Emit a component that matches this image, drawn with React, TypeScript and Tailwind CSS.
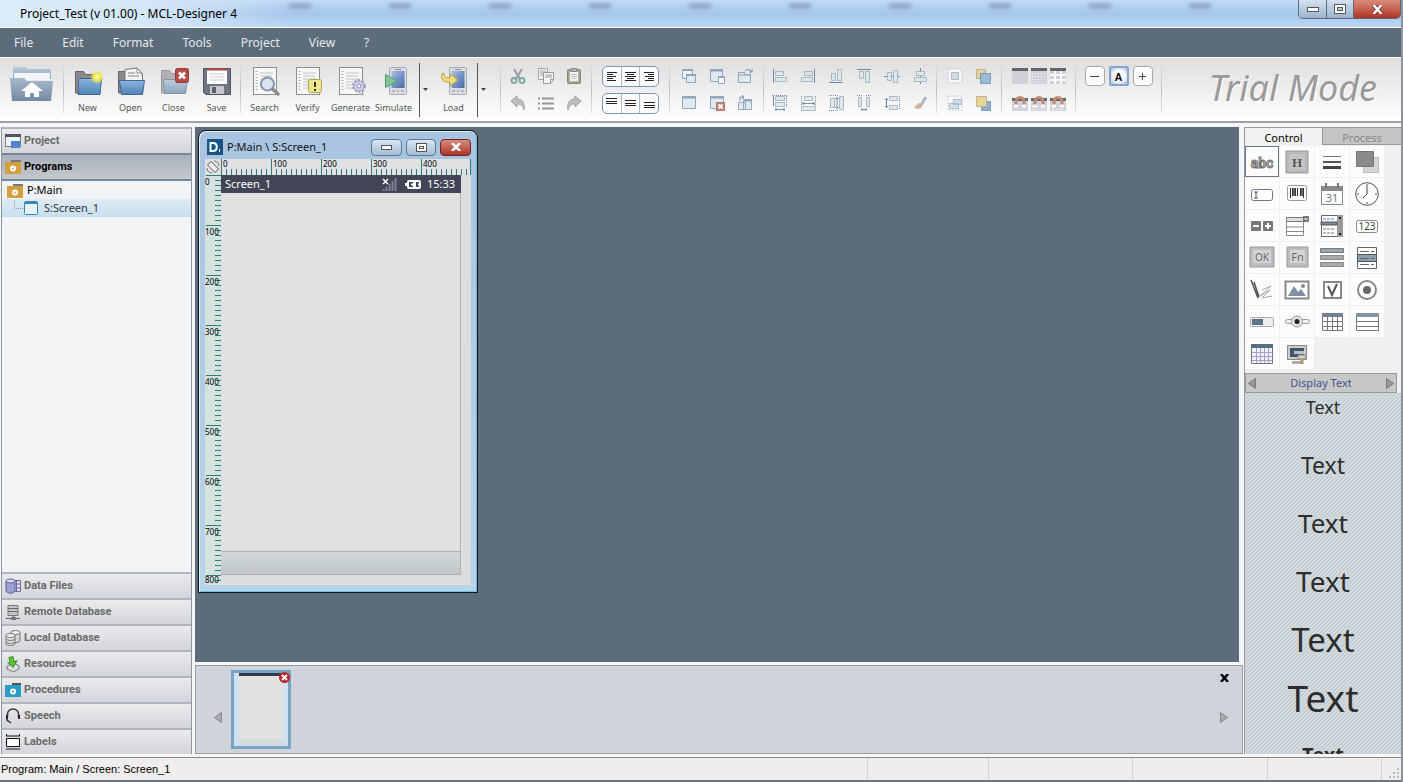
import type { ReactNode } from "react";

type IconProps = { w?: number; h?: number; box?: string; children: ReactNode };

// 图标外壳
function Icon({ w = 16, h = 16, box, children }: IconProps) {
  return (
    <svg width={w} height={h} viewBox={box || `0 0 ${w} ${h}`} fill="none" aria-hidden="true" className="shrink-0">
      {children}
    </svg>
  );
}

// 全局渐变
function Defs() {
  return (
    <svg width="0" height="0" className="absolute" aria-hidden="true">
      <defs>
        <linearGradient id="blue" x1="0" y1="0" x2="0" y2="1">
          <stop offset="0" stopColor="#8db6df" />
          <stop offset="1" stopColor="#4f80b5" />
        </linearGradient>
        <linearGradient id="pale" x1="0" y1="0" x2="0" y2="1">
          <stop offset="0" stopColor="#bccbdc" />
          <stop offset="1" stopColor="#8fa5be" />
        </linearGradient>
        <linearGradient id="home" x1="0" y1="0" x2="0" y2="1">
          <stop offset="0" stopColor="#a9b9cb" />
          <stop offset="1" stopColor="#7389a3" />
        </linearGradient>
        <linearGradient id="phone" x1="0" y1="0" x2="1" y2="1">
          <stop offset="0" stopColor="#a8c0e4" />
          <stop offset="1" stopColor="#4568a8" />
        </linearGradient>
        <radialGradient id="glow">
          <stop offset="0" stopColor="#fffbd0" />
          <stop offset="0.5" stopColor="#f4e64a" />
          <stop offset="1" stopColor="#f4e64a" stopOpacity="0" />
        </radialGradient>
      </defs>
    </svg>
  );
}

const folderBack = <path d="M2.500 27V5.500h8l2 3h14V27z" fill="#8a8a8a" stroke="#666" />;
const page = (
  <>
    <rect x="3.500" y="1.500" width="23" height="27" fill="#f7f7f5" stroke="#8e8e8e" />
    <path d="M6.500 5v21" stroke="#aaa" strokeWidth="2" strokeDasharray="1 2" />
    <path d="M10 7h13M10 10h12M10 13h13M10 16h11M10 19h13M10 22h11" stroke="#c4c4c4" />
  </>
);
const phone = (
  <>
    <rect x="10.500" y="1.500" width="17" height="27" rx="1" fill="#dcdde2" stroke="#a7a9b2" />
    <rect x="12.500" y="5" width="13" height="17" fill="url(#phone)" />
    <path d="M16 3.500h6M13 25h3M18 25h2M22 25h3" stroke="#8c8f9c" />
  </>
);

const big: Record<string, ReactNode> = {
  New: (
    <>
      {folderBack}
      <path d="M5.500 12.500h23l-1.500 16h-22z" fill="url(#blue)" stroke="#41678f" />
      <circle cx="24" cy="11" r="7" fill="url(#glow)" />
    </>
  ),
  Open: (
    <>
      {folderBack}
      <path d="M9 3.500l12-1.500 5 5 1 9H9z" fill="#f4f4f4" stroke="#777" />
      <path d="M12 7h7M12 10h11M21 2v5h5" stroke="#888" />
      <path d="M3.500 14.500h25l-2 14h-21z" fill="url(#blue)" stroke="#41678f" />
    </>
  ),
  Close: (
    <>
      <path d="M2.500 27V4.500h8l2 3h14V27z" fill="#b0b2b6" stroke="#999" />
      <path d="M4.500 13.500h24l-2 14h-21z" fill="url(#pale)" stroke="#8395aa" />
      <rect x="16.500" y="2.500" width="13" height="14" rx="2" fill="#b64a48" stroke="#8f3938" />
      <path d="M20 6.500l6 6M26 6.500l-6 6" stroke="#fff" strokeWidth="2.500" />
    </>
  ),
  Save: (
    <>
      <path d="M1.500 2.500h27v26h-25l-2-2z" fill="#707583" stroke="#50545f" />
      <rect x="5" y="3" width="20" height="15" fill="#fbfbfb" />
      <path d="M5 3.500h20" stroke="#b2464a" strokeWidth="2" />
      <path d="M8 8h14M8 11h14M8 14h14" stroke="#cfcfd4" />
      <rect x="8" y="20" width="14" height="8" fill="#c5c7cb" />
      <rect x="10" y="21" width="4" height="6" fill="#5b5f69" />
    </>
  ),
  Search: (
    <>
      {page}
      <circle cx="17.500" cy="18" r="6.500" fill="#d5e4f2" fillOpacity=".9" stroke="#8496ac" strokeWidth="2" />
      <path d="M22.500 23l5.500 5" stroke="#8a8a8a" strokeWidth="3.500" strokeLinecap="round" />
    </>
  ),
  Verify: (
    <>
      {page}
      <rect x="15.500" y="13.500" width="13" height="13" rx="2" fill="#efe78e" stroke="#b1a752" />
      <path d="M22 16v5M22 23v2" stroke="#333" strokeWidth="2" />
    </>
  ),
  Generate: (
    <>
      {page}
      <circle cx="23" cy="20" r="6" stroke="#9a9fbb" strokeWidth="2" strokeDasharray="2.200 1.600" />
      <circle cx="23" cy="20" r="5" fill="#cfd3e4" stroke="#9aa0bd" />
      <circle cx="23" cy="20" r="2" fill="#f2f2f6" stroke="#8e94b3" />
    </>
  ),
  Simulate: (
    <>
      {phone}
      <path d="M6.500 8.500l12 6.500-12 6.500z" fill="#7fc79a" stroke="#4f9a72" />
    </>
  ),
  Load: (
    <>
      {phone}
      <path d="M3 8c-2 6 3 9 8 8v4l8-6-8-6v4c-4 0-6-1-6-5z" fill="#f0dd7c" stroke="#b9a046" />
    </>
  ),
};

function BigButton({ name }: { name: string }) {
  return (
    <button className="flex h-full w-[43px] shrink-0 flex-col items-center pt-2">
      <Icon w={30} h={30}>{big[name]}</Icon>
      <span className="mt-[5px] text-[9px] leading-[14px] text-[#555]">{name}</span>
    </button>
  );
}

function Sep() {
  return <div className="h-12 w-px shrink-0 self-center bg-linear-to-b from-gray-300/50 via-[#bfbfbf] to-gray-300/50" />;
}

function DropArrow({ label }: { label: string }) {
  return (
    <button aria-label={label} className="flex h-[54px] w-[11px] shrink-0 items-center justify-center self-center border-l border-[#555]">
      <Icon w={5} h={3}><path d="M0 0h5L2.500 3z" fill="#444" /></Icon>
    </button>
  );
}

const st = "#8299b3";
const fl = "#dfe8f0";
const dk = "#5b78ab";

// 编辑
const editIcons: [string, ReactNode][] = [
  ["Cut", <><path d="M4 1l6 10M12 1L6 11" stroke="#8b9196" strokeWidth="2" /><circle cx="4" cy="12.500" r="2.500" stroke="#709c95" strokeWidth="2" /><circle cx="12" cy="12.500" r="2.500" stroke="#709c95" strokeWidth="2" /></>],
  ["Copy", <><path d="M.5.5h9v11h-9zM2 3h6M2 5h6M2 7h6" fill="#f5f5f5" stroke="#999" /><path d="M5.500 4.500h10v7l-3 4h-7zM7 7h7M7 9h7M12.500 15v-3.500h3" fill="#fafafa" stroke="#8a8a8a" /></>],
  ["Paste", <><rect x="1.500" y="1.500" width="13" height="14" rx="1" fill="#9d9576" stroke="#7c765f" /><path d="M3.500 3.500h9v10h-9z" fill="#f5f5f3" stroke="#aaa" /><path d="M5 .5h6v3H5z" fill="#aaa" stroke="#777" /><path d="M5 6.500h6M5 8.500h6M5 10.500h5" stroke="#bbb" /></>],
  ["Undo", <path d="M1 6l6-5v3c6 0 8 4 7 11-1-4-3-6-7-6v3z" fill="#b5b5b5" stroke="#939393" />],
  ["List", <path d="M0 3.500h2M0 8.500h2M0 13.500h2M4 3.500h12M4 8.500h12M4 13.500h12" stroke="#888" strokeWidth="2" />],
  ["Redo", <path d="M15 6L9 1v3C3 4 1 8 2 15c1-4 3-6 7-6v3z" fill="#b5b5b5" stroke="#939393" />],
];

// 窗口
const winIcons: [string, ReactNode][] = [
  ["Cascade", <><path d="M1.500 1.500h10v9h-10z" fill="#eef3f8" stroke={st} /><path d="M1 2.500h11" stroke={st} /><path d="M5.500 6.500h9v8h-9z" fill={fl} stroke={st} /><path d="M5 7h10" stroke={st} strokeWidth="2" /></>],
  ["Resize window", <><path d="M1.500 1.500h12v12h-12z" fill={fl} stroke={st} /><path d="M1 2.500h13" stroke={st} strokeWidth="2" /><path d="M9.500 8.500h6v7h-6z" fill="#fff" stroke={st} /><path d="M9 9.500h7" stroke={st} /></>],
  ["Rotate window", <><path d="M1.500 4.500h6v2h6v8h-12z" fill={fl} stroke={st} /><path d="M1 7h13" stroke={st} /><path d="M8 3c2-2 5-2 6 1M12 4h3V1" stroke={dk} /></>],
  ["Window", <><path d="M1.500 1.500h13v12h-13z" fill={fl} stroke={st} /><path d="M1 2.500h14" stroke={st} strokeWidth="2" /></>],
  ["Close window", <><path d="M1.500 1.500h13v12h-13z" fill={fl} stroke={st} /><path d="M1 2.500h14" stroke={st} strokeWidth="2" /><path d="M7 7h9v9H7z" fill="#b3655f" /><path d="M9.500 9.500l4 4M13.500 9.500l-4 4" stroke="#fff" strokeWidth="2" /></>],
  ["Split window", <><path d="M1.500 7.500h7v7h-7zM6.500 4.500h8v10h-8z" fill={fl} stroke={st} /><path d="M6 5.500h9" stroke={st} strokeWidth="2" /><path d="M3 6V2h4M5 0l2 2-2 2" stroke={dk} /></>],
];

// 对齐
const bars = (d: string, line: string, dash?: boolean) => (
  <>
    <path d={d} fill="#dde6e9" stroke="#9db0bf" />
    <path d={line} stroke={dk} strokeDasharray={dash ? "1 1" : undefined} />
  </>
);
const alignIcons: [string, ReactNode][] = [
  ["Align left", bars("M3.500 3.500h8v4h-8zM3.500 9.500h11v4h-11z", "M1.500 1v14")],
  ["Align right", bars("M4.500 3.500h8v4h-8zM1.500 9.500h11v4h-11z", "M14.500 1v14")],
  ["Align bottom", bars("M3.500 5.500h4v7h-4zM9.500 1.500h4v11h-4z", "M1 14.500h14")],
  ["Align top", bars("M3.500 3.500h4v7h-4zM9.500 3.500h4v11h-4z", "M1 1.500h14")],
  ["Align middle", <><path d="M0 8.500h16" stroke={dk} />{bars("M3.500 4.500h4v8h-4zM9.500 2.500h4v12h-4z", "")}</>],
  ["Align center", <><path d="M8.500 0v16" stroke={dk} />{bars("M4.500 3.500h8v4h-8zM2.500 9.500h12v4h-12z", "")}</>],
  ["Same width", <>{bars("M3.500 1.500h9v4h-9zM3.500 7.500h9v4h-9z", "M14.500 1v12M0 .5h15", true)}<path d="M1.500 1v10M3 14.500h10M4 13v3M12 13v3" stroke={dk} /></>],
  ["Space across", <>{bars("M4.500 1.500h8v4h-8zM1.500 11.500h14v4h-14z", "M1.500 1v9M15.500 1v9", true)}<path d="M2 8.500h13M3.500 7v3M13.500 7v3" stroke={dk} /></>],
  ["Same height", <>{bars("M2.500 3.500h4v9h-4zM11.500 1.500h4v13h-4z", "M1 .5h9M1 15.500h9", true)}<path d="M9 2v12M7.500 3.500h3M7.500 12.500h3" stroke={dk} /></>],
  ["Space columns", <>{bars("M2.500 2.500h3v9h-3zM10.500 2.500h3v9h-3z", "M1 .5h5M10 .5h5", true)}<path d="M5 14.500h6M6 13v3M10 13v3" stroke={dk} /></>],
  ["Space rows", <>{bars("M5.500 1.500h8v4h-8zM5.500 10.500h8v4h-8z", "M15.500 1v14", true)}<path d="M2.500 3v10M1 4.500h3M1 11.500h3" stroke={dk} /></>],
  ["Format painter", <><path d="M14 2l-5 8" stroke="#a2acb8" strokeWidth="3" /><path d="M2 12c3-1 3-4 6-4l2 3c0 3-5 4-8 1z" fill="#caa58a" /></>],
];

const orderIcons: [string, ReactNode][] = [
  ["Group", <><path d="M1 1h14v14H1z" fill="#fafafa" stroke="#bcc5cf" strokeDasharray="2 1" /><path d="M4.500 4.500h7v7h-7z" fill="#cfd9e3" stroke="#a4b3c2" /></>],
  ["Bring to front", <><path d="M1.500 1.500h9v9h-9z" fill="#dfcf9a" stroke="#b8aa78" /><path d="M5.500 5.500h10v10h-10z" fill="#8fb1d6" stroke="#6f8fb3" /></>],
  ["Ungroup", <><path d="M1 1h14v14H1z" fill="#fafafa" stroke="#bcc5cf" strokeDasharray="2 1" /><path d="M6.500 4.500h8v5h-8zM2.500 8.500h9v5h-9z" fill="#cfd9e3" stroke="#a4b3c2" /></>],
  ["Send to back", <><path d="M6.500 6.500h9v9h-9z" fill="#7d9cc2" stroke="#6f8fb3" /><path d="M1.500 1.500h10v10h-10z" fill="#e3d08c" stroke="#b8aa78" /></>],
];

const magnet = <><path d="M4 11V6.500a4 4 0 018 0V11" stroke="#b5795c" strokeWidth="3" /><path d="M2 11h4M10 11h4" stroke="#fff" strokeWidth="3" /></>;
const dots = <path d="M1 5.500h14M1 8.500h14M1 11.500h14M1 14.500h14" stroke="#fff" strokeDasharray="1 2" />;
const snapIcons: [string, ReactNode][] = [
  ["No grid", <><path d="M0 1h16v15H0z" fill="#ccccd6" /><path d="M0 1.500h16" stroke="#4d4d54" strokeWidth="3" /></>],
  ["Dot grid", <><path d="M0 1h16v15H0z" fill="#ccccd6" />{dots}<path d="M0 1.500h16" stroke="#4d4d54" strokeWidth="3" /></>],
  ["Line grid", <><path d="M0 1h16v15H0z" fill="#ccccd6" /><path d="M5 3v13M11 3v13M0 7h16M0 12h16" stroke="#fff" strokeWidth="2" /><path d="M0 1.500h16" stroke="#4d4d54" strokeWidth="3" /></>],
  ["Snap off", <><path d="M0 3h16v13H0z" fill="#ccccd6" /><path d="M0 4.500h16" stroke="#4d4d54" strokeWidth="3" />{magnet}</>],
  ["Snap to dots", <><path d="M0 3h16v13H0z" fill="#ccccd6" /><path d="M0 4.500h16" stroke="#4d4d54" strokeWidth="3" /><path d="M1 11.500h14M1 14.500h14" stroke="#fff" strokeDasharray="1 2" />{magnet}</>],
  ["Snap to lines", <><path d="M0 3h16v13H0z" fill="#ccccd6" /><path d="M0 4.500h16" stroke="#4d4d54" strokeWidth="3" /><path d="M2 14.500h12" stroke="#fff" strokeDasharray="2 2" />{magnet}</>],
];

function IconGroup({ items, cols, width }: { items: [string, ReactNode][]; cols: string; width: string }) {
  return (
    <>
      <div className={`grid shrink-0 justify-center gap-y-[11px] self-start pt-2.5 opacity-85 ${cols} ${width}`}>
        {items.map(([name, art]) => (
          <button key={name} aria-label={name} className="flex justify-center">
            <Icon>{art}</Icon>
          </button>
        ))}
      </div>
      <Sep />
    </>
  );
}

function AlignBox({ labels, paths }: { labels: string[]; paths: string[] }) {
  return (
    <div className="flex h-[21px] w-[57px] divide-x divide-[#a9bccb] rounded-[5px] border border-[#7f97ab] bg-[#fcfcfc]">
      {paths.map((d, i) => (
        <button key={labels[i]} aria-label={labels[i]} className="flex flex-1 items-center justify-center">
          <Icon w={11} h={11}><path d={d} stroke="#222" /></Icon>
        </button>
      ))}
    </div>
  );
}

function Toolbar() {
  return (
    <div className="flex h-[65px] shrink-0 items-stretch overflow-hidden border-b-2 border-[#9fa1a6] bg-linear-to-b from-[#dedede] to-white">
      <button aria-label="Home" className="flex w-[63px] shrink-0 items-start justify-center pt-2">
        <Icon w={43} h={36}>
          <path d="M3 12V1h13l2 2h23v10z" fill="url(#pale)" />
          <path d="M4 7h36v7H4z" fill="#f2f5f8" />
          <path d="M0 12h14l3 3h26l-2 20H2z" fill="url(#home)" />
          <path d="M22 16l11 9h-4v6h-5v-4h-4v4h-5v-6h-4z" fill="#fff" />
        </Icon>
      </button>
      <Sep />
      <div className="flex shrink-0 px-[2px]">
        {["New", "Open", "Close", "Save"].map((n) => <BigButton key={n} name={n} />)}
      </div>
      <Sep />
      <div className="flex shrink-0 pr-1 pl-0.5">
        {["Search", "Verify", "Generate", "Simulate"].map((n) => <BigButton key={n} name={n} />)}
      </div>
      <DropArrow label="Simulate options" />
      <div className="flex shrink-0 px-[2px]"><BigButton name="Load" /></div>
      <DropArrow label="Load options" />
      <div className="w-3 shrink-0" />
      <Sep />
      <IconGroup items={editIcons} cols="grid-cols-[repeat(3,28px)]" width="w-[90px]" />
      <div className="flex w-[77px] shrink-0 flex-col items-center gap-1.5 pt-2">
        <AlignBox
          labels={["Text left", "Text center", "Text right"]}
          paths={["M1 1.500h10M1 3.500h6M1 5.500h9M1 7.500h6M1 9.500h9", "M0 1.500h11M2 3.500h7M0 5.500h11M2 7.500h7M0 9.500h11", "M0 1.500h10M4 3.500h6M1 5.500h9M4 7.500h6M1 9.500h9"]}
        />
        <AlignBox
          labels={["Text top", "Text middle", "Text bottom"]}
          paths={["M0 .5h11M0 3.500h11M0 5.500h11", "M0 2.500h11M0 5.500h11M0 7.500h11", "M0 4.500h11M0 7.500h11M0 9.500h11"]}
        />
      </div>
      <Sep />
      <IconGroup items={winIcons} cols="grid-cols-[repeat(3,28px)]" width="w-[93px]" />
      <IconGroup items={alignIcons} cols="grid-cols-[repeat(6,28px)]" width="w-[172px]" />
      <IconGroup items={orderIcons} cols="grid-cols-[repeat(2,28px)]" width="w-[64px]" />
      <IconGroup items={snapIcons} cols="grid-cols-[repeat(3,19px)]" width="w-[73px]" />
      <div className="flex w-[85px] shrink-0 items-start justify-center gap-1 pt-2">
        <button aria-label="Zoom out" className="flex size-5 items-center justify-center rounded border border-[#aaa] bg-[#fafafa]">
          <Icon w={9} h={9}><path d="M0 4.500h9" stroke="#444" /></Icon>
        </button>
        <button className="flex size-5 items-center justify-center rounded-xs border-2 border-[#86a5cf] bg-[radial-gradient(#ffffff_50%,#9db6da_100%)] text-[11px] leading-none font-semibold text-black">A</button>
        <button aria-label="Zoom in" className="flex size-5 items-center justify-center rounded border border-[#aaa] bg-[#fafafa]">
          <Icon w={9} h={9}><path d="M1 4.500h7M4.500 1v7" stroke="#444" /></Icon>
        </button>
      </div>
      <Sep />
      <div className="flex flex-1 items-center justify-end pr-6 pb-1 text-[36px] leading-none whitespace-nowrap text-[#9b9b9b] italic [text-shadow:1px_1px_0_#fff]">
        Trial Mode
      </div>
    </div>
  );
}

// 侧边栏图标
const gear = <circle cx="8" cy="9.500" r="2" stroke="#fff" strokeWidth="2" />;
const side: Record<string, ReactNode> = {
  Project: <><path d="M.5 1.500h15v12H.5z" fill="#f1f2f4" stroke="#777c85" /><path d="M0 2.500h16" stroke="#4f545e" strokeWidth="3" /><path d="M6 8h9v7H6z" fill="#4f86d0" /></>,
  Programs: <><path d="M6 3V1h10v3" fill="#777" /><path d="M0 3h16v12H0z" fill="#d3a041" />{gear}</>,
  "Data Files": <><path d="M5.500 2.500h10v11h-10zM5 6h11M5 10h11M11.500 2v12" fill="#e0e0f2" stroke="#6667a0" /><path d="M1 3v10c2 3 7 3 9 0V3z" fill="#9d9fd0" stroke="#5f609c" /><ellipse cx="5.500" cy="3" rx="4.500" ry="2" fill="#dcdcf5" stroke="#5f609c" /></>,
  "Remote Database": <><path d="M3 1.500h10v10H3z" fill="#c5c5c5" stroke="#777" /><path d="M3 4.500h10M3 7.500h10M8.500 12v2M1 14.500h14" stroke="#666" /><path d="M6 13h5v3H6z" fill="#777" /></>,
  "Local Database": <><path d="M6 2v9c2 2 7 2 9 0V2z" fill="#d5d5d5" stroke="#777" /><ellipse cx="10.500" cy="2.500" rx="4.500" ry="2" fill="#f0f0f0" stroke="#777" /><path d="M1 5v9c2 2 7 2 9 0V5z" fill="#ddd" stroke="#777" /><ellipse cx="5.500" cy="5.500" rx="4.500" ry="2" fill="#f4f4f4" stroke="#777" /><path d="M1 9c2 2 7 2 9 0M1 12c2 2 7 2 9 0" stroke="#777" /></>,
  Resources: <><path d="M2 10l7-3 5 3v3l-6 3-6-3z" fill="#dadada" stroke="#777" /><path d="M5 1h4v5h3l-5 5-4-5h2z" fill="#5fc83a" stroke="#3a8e20" transform="rotate(-12 7 6)" /></>,
  Procedures: <><path d="M7 3V1h9v3" fill="#555" /><path d="M0 3h16v12H0z" fill="#2d9bc7" />{gear}</>,
  Speech: <><path d="M2.500 9V6a5.500 5 0 0111 0v3M2 10v2l4 3" stroke="#333" strokeWidth="1.500" /><path d="M1 7h2v4H1zM13 7h2v4h-2z" fill="#222" /></>,
  Labels: <path d="M1.500 4.500h13v8h-13zM1 2h14M1.500 0v2M14.500 0v2M1 15h14" fill="#fff" stroke="#111" />,
};

function SideRow({ name, active }: { name: string; active?: boolean }) {
  return (
    <button
      className={
        "flex h-[26px] w-full shrink-0 items-center gap-[3px] border-t-2 pl-[3px] font-['Roboto',sans-serif] text-[11px] font-bold " +
        (active
          ? "border-[#778797] bg-linear-to-b from-[#a9b0b9] to-[#c5c9cf] text-black"
          : "border-[#b0b6bd] bg-linear-to-b from-[#ebebed] to-[#d3d5db] text-[#6a6a6a]")
      }
    >
      <Icon>{side[name]}</Icon>
      {name}
    </button>
  );
}

function Sidebar() {
  return (
    <nav className="flex w-[191px] shrink-0 flex-col border-x border-[#8d97a1] bg-[#f1f3f5]">
      <SideRow name="Project" />
      <SideRow name="Programs" active />
      <div className="flex-1 border-t-2 border-[#778797] pt-px text-[11px] text-black">
        <button className="flex h-[17px] w-full items-center gap-1 pl-[5px]">
          <Icon>{side.Programs}</Icon>P:Main
        </button>
        <button className="flex h-[18px] w-full items-center bg-linear-to-b from-[#deebf4] to-[#c7dfee] pl-3 text-[#333]">
          <Icon w={10} h={16}><path d="M.5 0v8.500H10" stroke="#999" strokeDasharray="1 1" /></Icon>
          <Icon w={14} h={14}>
            <rect x=".5" y=".5" width="13" height="13" rx="1" fill="#e6f2fb" stroke="#3b86b8" />
            <path d="M0 2h14" stroke="#3b86b8" strokeWidth="2" />
          </Icon>
          <span className="ml-1.5">S:Screen_1</span>
        </button>
      </div>
      {["Data Files", "Remote Database", "Local Database", "Resources", "Procedures", "Speech", "Labels"].map((n) => (
        <SideRow key={n} name={n} />
      ))}
    </nav>
  );
}

const hMarks = [0, 100, 200, 300, 400];
const vMarks = [0, 100, 200, 300, 400, 500, 600, 700];

function Ruler() {
  return (
    <div className="flex h-4 bg-[#dfe1e2] text-[8px] leading-[9px] text-black">
      <div className="flex w-4 items-center justify-center">
        <Icon w={14} h={14}>
          <path d="M5 1.500l7.500 7.500-3.500 3.500L1.500 5z" fill="#eee" stroke="#555" />
          <path d="M8 1c3 0 5 2 5 5M1 8c0 3 2 5 5 5" stroke="#777" />
        </Icon>
      </div>
      {hMarks.map((m) => (
        <div key={m} className="relative h-4 w-[50px] border-[#2f7c77] pl-0.5 last:border-r">
          <span>{m}</span>
          <svg width="49" height="16" className="absolute top-0 left-0" aria-hidden="true">
            <path d="M.5 0v16M5.500 10v6M10.500 10v6M15.500 10v6M20.500 10v6M25.500 10v6M30.500 10v6M35.500 10v6M40.500 10v6M45.500 10v6" stroke="#2f7c77" />
          </svg>
        </div>
      ))}
    </div>
  );
}

function VRuler() {
  return (
    <div className="w-4 overflow-hidden bg-[#d4e3df] text-[8px] leading-[9px] text-black">
      {[...vMarks, 800].map((m) => (
        <div key={m} className={m === 800 ? "relative h-2.5" : "relative h-[50px] pt-0.5"}>
          <svg width="16" height="50" className="absolute top-0 left-0" aria-hidden="true">
            <path d="M1 .5h15M10 5.500h6M10 10.500h6M10 15.500h6M10 20.500h6M10 25.500h6M10 30.500h6M10 35.500h6M10 40.500h6M10 45.500h6" stroke="#2f7c77" />
          </svg>
          <span className="relative">{m}</span>
        </div>
      ))}
    </div>
  );
}

function ScreenWindow() {
  return (
    <div className="w-[280px] rounded-t-lg border border-[#10181f] bg-linear-to-b from-[#a8c4e0] to-[#b8d4ea] px-1.5 pb-[7px] shadow-[inset_1px_1px_0_#e6f3fb,inset_-1px_-1px_0_#6fc0dc]">
      <div className="flex h-7 items-center gap-1 pt-1 pl-0.5">
        <Icon>
          <rect width="16" height="16" fill="#175587" />
          <path d="M3.500 4v8h2.500c5 0 5-8 0-8z" stroke="#fff" strokeWidth="2" />
          <path d="M12.500 10v3" stroke="#fff" />
        </Icon>
        <span className="flex-1 text-[11px] text-[#111]">P:Main \ S:Screen_1</span>
        <button aria-label="Minimize screen" className="flex h-[17px] w-[31px] items-center justify-center rounded-sm border border-[#5e7891] bg-linear-to-b from-[#dbe7f3] to-[#a4bdd7]">
          <Icon w={11} h={5}><rect x=".5" y=".5" width="10" height="4" fill="#fff" stroke="#555" /></Icon>
        </button>
        <button aria-label="Maximize screen" className="flex h-[17px] w-[30px] items-center justify-center rounded-sm border border-[#5e7891] bg-linear-to-b from-[#dbe7f3] to-[#a4bdd7]">
          <Icon w={11} h={9}><rect x=".5" y=".5" width="10" height="8" fill="#fff" stroke="#555" /><rect x="3.500" y="3.500" width="4" height="2" stroke="#555" /></Icon>
        </button>
        <button aria-label="Close screen" className="flex h-[17px] w-[31px] items-center justify-center rounded-sm border border-[#6b2724] bg-linear-to-b from-[#d58a80] to-[#ae3026]">
          <Icon w={10} h={8}><path d="M1 0l8 8M9 0L1 8" stroke="#fff" strokeWidth="2.500" /></Icon>
        </button>
      </div>
      <Ruler />
      <div className="flex bg-[#dcdddd]">
        <VRuler />
        <div className="w-60">
          <div className="flex h-[18px] items-center bg-[#414555] pr-1.5 pl-1 text-[11px] text-white">
            <span className="flex-1">Screen_1</span>
            <Icon w={15} h={13}>
              <path d="M1 1l5 5M6 1L1 6" stroke="#fff" strokeWidth="1.500" />
              <path d="M1.500 13v-2M4.500 13V9M7.500 13V6M10.500 13V3M13.500 13V0" stroke="#7d8193" strokeWidth="2" />
            </Icon>
            <span className="w-2" />
            <Icon w={16} h={9}>
              <rect x="3" y="1" width="12" height="7" rx="1" stroke="#fff" strokeWidth="2" />
              <path d="M0 3h3v3H0z" fill="#fff" />
              <path d="M6 4.500h2M13 4.500h3" stroke="#fff" strokeWidth="2" />
              <path d="M8 2h3v5H8z" fill="#fff" />
            </Icon>
            <span className="ml-1.5">15:33</span>
          </div>
          <div className="h-[358px] border-r border-[#b3b5b5] bg-[#e1e1e1]" />
          <div className="h-6 border-y border-r border-[#aeb3b4] bg-linear-to-b from-[#d0d6d9] to-[#c0c7c9]" />
        </div>
      </div>
    </div>
  );
}

function FilmStrip() {
  return (
    <div className="mt-[3px] flex h-[89px] shrink-0 items-stretch border border-[#9a9a9a] bg-[#cfd3dc]">
      <button aria-label="Previous screen" className="flex w-[35px] items-center justify-center pt-4 pl-2">
        <Icon w={8} h={11}><path d="M7.500.5v10L.5 5.500z" fill="#aaa" stroke="#888" /></Icon>
      </button>
      <div className="relative my-1 w-[60px] border-[3px] border-[#7ba3c1] bg-[#cfe0f0] px-[5px] pb-px">
        <div className="flex h-full flex-col bg-[#e2e2e2]">
          <div className="h-[3px] bg-[#2e3a52]" />
          <div className="flex-1" />
          <div className="h-1.5 bg-[#d3dcdc]" />
        </div>
        <button aria-label="Remove screen" className="absolute -top-px -right-0.5">
          <Icon w={11} h={11}><circle cx="5.500" cy="5.500" r="5.500" fill="#b8262c" /><path d="M3 3l5 5M8 3L3 8" stroke="#fff" strokeWidth="2" /></Icon>
        </button>
      </div>
      <div className="flex-1" />
      <div className="flex w-9 flex-col items-center pt-2">
        <button aria-label="Close strip"><Icon w={9} h={8}><path d="M1 0l7 8M8 0L1 8" stroke="#000" strokeWidth="2.500" /></Icon></button>
        <button aria-label="Next screen" className="mt-[30px]"><Icon w={8} h={11}><path d="M.5.5v10l7-5z" fill="#aaa" stroke="#888" /></Icon></button>
      </div>
    </div>
  );
}

const key = <><path d="M1 1h24v20H1z" fill="#bcbcbc" stroke="#999" /><path d="M4 4h18v13H4z" fill="#d5d5d5" stroke="#c8c8c8" /></>;

// 控件图标 26x24
const controls: [string, ReactNode][] = [
  ["Display text", <text x="13" y="18" textAnchor="middle" fontSize="14" fontWeight="700" fill="#bbb" stroke="#666" strokeWidth=".8" fontFamily="Roboto, sans-serif">abc</text>],
  ["Header", <><path d="M2 1h22v22H2z" fill="#b9b9b9" stroke="#999" /><path d="M5 4h16v16H5z" fill="#c4c4c4" /><text x="13" y="17" textAnchor="middle" fontSize="13" fontWeight="700" fill="#555" fontFamily="Liberation Serif, serif">H</text></>],
  ["Line", <><path d="M4 6.500h18" stroke="#777" /><path d="M4 12h18" stroke="#555" strokeWidth="2" /><path d="M4 17.500h18" stroke="#444" strokeWidth="3" /></>],
  ["Box", <><path d="M9.500 7.500h15v15h-15z" fill="#d5d5d5" stroke="#bbb" /><path d="M2.500 1.500h17v15h-17z" fill="#8a8a8a" stroke="#777" /></>],
  ["Input", <><rect x="2.500" y="7.500" width="21" height="11" rx="2" fill="#fff" stroke="#777" /><path d="M5 10h4M7 10v6M5 16h4" stroke="#555" /></>],
  ["Barcode", <><rect x="3.500" y="3.500" width="19" height="15" rx="2" fill="#fff" stroke="#999" /><path d="M6.500 6v10M8.500 6v8M11.500 6v8M13.500 6v8M16.500 6v8M19.500 6v10" stroke="#333" /><path d="M10 6v8M18 6v8" stroke="#333" strokeWidth="1.500" /></>],
  ["Date", <><path d="M2.500 4.500h21v18h-21z" fill="#fff" stroke="#888" /><path d="M2 4h22v5H2z" fill="#888" /><path d="M7 1v5M19 1v5" stroke="#777" strokeWidth="2" /><text x="13" y="20" textAnchor="middle" fontSize="11" fill="#777">31</text></>],
  ["Time", <><circle cx="13" cy="12" r="11.300" fill="#fff" stroke="#555" /><path d="M13 4v8l-4 4" stroke="#444" /><path d="M13 2v2M13 20v2M3 12h2M21 12h2" stroke="#555" /></>],
  ["Spin", <><rect x="2" y="7" width="10" height="10" rx="1" fill="#777" /><rect x="14" y="7" width="10" height="10" rx="1" fill="#777" /><path d="M4 12h6M16 12h6M19 9v6" stroke="#fff" strokeWidth="2" /></>],
  ["Combo", <><path d="M2.500 3.500h17v18h-17zM2 13h17M2 17.500h17" fill="#fff" stroke="#888" /><path d="M2.500 3.500h22v4h-22z" fill="#ddd" stroke="#777" /><path d="M19 2h6v5h-6z" fill="#777" /><path d="M20.500 4l1.500 2 1.500-2" stroke="#fff" /></>],
  ["List", <><path d="M2.500 1.500h21v21h-21z" fill="#fff" stroke="#666" /><path d="M18 1h6v22h-6z" fill="#999" /><path d="M20 4h2M20 20h2" stroke="#222" strokeWidth="2" /><path d="M2 8h16v3H2z" fill="#7e8d9b" stroke="#555" /><path d="M4 5h12M4 15h12M4 19h12" stroke="#777" strokeDasharray="3 1" /></>],
  ["Number", <><rect x="2.500" y="6.500" width="21" height="12" rx="2" fill="#fff" stroke="#888" /><text x="13" y="16" textAnchor="middle" fontSize="10" fill="#444">123</text></>],
  ["OK button", <>{key}<text x="13" y="15" textAnchor="middle" fontSize="10" fill="#666">OK</text></>],
  ["Function key", <><path d="M3 1h21v20H3z" fill="#bcbcbc" stroke="#999" /><path d="M6 4h15v13H6z" fill="#d5d5d5" /><text x="13.500" y="15" textAnchor="middle" fontSize="11" fill="#666">Fn</text></>],
  ["Menu", <><path d="M1.500 2.500h23v4h-23z" fill="#9ba8b4" stroke="#777" /><path d="M1.500 9.500h23v4h-23zM1.500 16.500h23v4h-23z" fill="#aaa" stroke="#888" /></>],
  ["Grouped list", <><path d="M3.500 1.500h19v21h-19z" fill="#fff" stroke="#666" /><path d="M3.500 8.500h19v7h-19z" fill="#8ea0af" stroke="#555" /><path d="M6 5.500h9M17 5.500h3M6 12.500h9M17 12.500h3M6 18.500h9M17 18.500h3" stroke="#666" /></>],
  ["Signature", <><path d="M2 2l7 18M5 4l5 15" stroke="#555" strokeWidth="1.500" /><path d="M9 20l13-12-9 4M11 18l10-6-8 8 10-2" stroke="#aaa" /></>],
  ["Image", <><path d="M1.500 3.500h23v17h-23z" fill="#fff" stroke="#888" strokeWidth="2" /><path d="M4 18l6-10 4 6 3-3 5 7z" fill="#7d91a3" /><circle cx="19" cy="8" r="2" fill="#888" /></>],
  ["Check box", <><path d="M5 4h17v16H5z" fill="#fff" stroke="#888" strokeWidth="2" /><path d="M9 8l4 9 5-11" stroke="#555" strokeWidth="2" /></>],
  ["Radio button", <><circle cx="13" cy="12" r="9" fill="#fff" stroke="#888" strokeWidth="2" /><circle cx="13" cy="12" r="4" fill="#666" /></>],
  ["Progress", <><rect x="1.500" y="7.500" width="23" height="9" rx="1" fill="#eee" stroke="#aaa" /><path d="M3 9h11v6H3z" fill="#5e7589" /></>],
  ["Slider", <><rect x="1.500" y="9.500" width="24" height="4" rx="2" fill="#eee" stroke="#999" /><circle cx="13" cy="11.500" r="5.500" fill="#e4e4e4" stroke="#999" /><circle cx="13" cy="11.500" r="2.500" fill="#222" /></>],
  ["Grid", <><path d="M3.500 3.500h20v17h-20zM3 11.500h20M3 16.500h20M8.500 4v16M13.500 4v16M18.500 4v16" fill="#fff" stroke="#777" /><path d="M3 3h21v4H3z" fill="#75818c" /></>],
  ["Table", <><path d="M2.500 3.500h22v17h-22zM2 11.500h22M2 16.500h22" fill="#fff" stroke="#777" /><path d="M2 3h23v4H2z" fill="#87939d" /></>],
  ["Data grid", <><path d="M2.500 2.500h21v19h-21z" fill="#f0f0fa" stroke="#777" /><path d="M3 10.500h20M3 14.500h20M3 18.500h20M7.500 6v15M11.500 6v15M15.500 6v15M19.500 6v15" stroke="#9ea2cc" /><path d="M2 2h22v4H2z" fill="#576c7e" /></>],
  ["Custom control", <><path d="M3.500 3.500h19v14h-19z" fill="#ccc" stroke="#888" /><path d="M6 6h14v9H6z" fill="#42566b" /><path d="M10 9h10v3H10z" fill="#b8c2cc" /><path d="M14 13h8v4h-8z" fill="#d8d2b8" stroke="#888" /><path d="M8 20.500h10" stroke="#aaa" strokeWidth="3" /><path d="M18 17v5" stroke="#a39a70" strokeWidth="3" /></>],
];

const samples: [string, string][] = [
  ["s1", "text-[18px]"],
  ["s2", "text-[23px]"],
  ["s3", "text-[26px]"],
  ["s4", "text-[28px]"],
  ["s5", "text-[33px]"],
  ["s6", "text-[37px]"],
  ["s7", "text-[20px] font-bold"],
];

function Palette() {
  return (
    <aside className="flex w-[157px] shrink-0 flex-col overflow-hidden border-l border-[#999] bg-[#f0f0f0]">
      <div className="flex h-[18px] shrink-0 border-t border-[#999] text-[11px]">
        <button className="w-[77px] bg-[#f2f2f2] pt-0.5 text-black">Control</button>
        <button className="flex-1 border-b border-l border-[#999] bg-[#c4c4c4] pt-0.5 text-[#888]">Process</button>
      </div>
      <div className="grid shrink-0 grid-cols-[repeat(4,34px)] gap-px pt-px">
        {controls.map(([name, art], i) => (
          <button
            key={name}
            aria-label={name}
            className={"flex h-[31px] items-center justify-center bg-[#fcfcfc] " + (i === 0 ? "border border-[#6b7885]" : "")}
          >
            <Icon w={26} h={24}>{art}</Icon>
          </button>
        ))}
      </div>
      <div className="mt-1 mr-1 flex h-5 shrink-0 items-center justify-between border border-[#999] bg-[#c8c8c8] px-0.5 text-[11px] text-[#41548a]">
        <button aria-label="Previous style"><Icon w={8} h={11}><path d="M7.500.5v10L.5 5.500z" fill="#999" stroke="#777" /></Icon></button>
        Display Text
        <button aria-label="Next style"><Icon w={8} h={11}><path d="M.5.5v10l7-5z" fill="#999" stroke="#777" /></Icon></button>
      </div>
      <div className="min-h-0 flex-1 overflow-hidden bg-[linear-gradient(135deg,#e2e8ea_12.5%,#c5cfd3_12.5%,#c5cfd3_50%,#e2e8ea_50%,#e2e8ea_62.5%,#c5cfd3_62.5%)] bg-size-[4px_4px] text-center text-[#2d2d2d]">
        {samples.map(([id, size]) => (
          <div key={id} className={"mb-[30px] flex h-7 items-center justify-center leading-none " + size}>Text</div>
        ))}
      </div>
    </aside>
  );
}

export default function App() {
  return (
    <div className="flex h-screen flex-col overflow-hidden border-r-2 border-[#8d949c] bg-[#f5f6f7] font-['Noto_Sans',sans-serif] text-[11px]">
      <Defs />
      {/* 标题栏 */}
      <header className="relative flex h-7 shrink-0 items-center border-b border-white bg-linear-to-b from-[#c3daf3] via-[#a5c6ec] to-[#b9d8f5] pl-5">
        <div className="absolute inset-0 flex justify-end gap-[78px] overflow-hidden pt-1 pr-[190px] blur-[2px]" aria-hidden="true">
          {Array.from({ length: 10 }, (_, i) => <span key={i} className="h-1 w-[22px] shrink-0 bg-[#8198ba]" />)}
        </div>
        <div className="absolute inset-y-0 left-0 w-72 bg-linear-to-r from-[#dcecf8] via-[#d5e7f8] to-transparent" />
        <h1 className="relative flex-1 text-[12px] text-black">Project_Test (v 01.00) - MCL-Designer 4</h1>
        <div className="relative flex h-[19px] self-start overflow-hidden rounded-b-[5px] border border-t-0 border-[#5b6a7c]">
          <button aria-label="Minimize" className="flex w-7 items-center justify-center border-r border-[#5b6a7c] bg-linear-to-b from-[#d4e2f0] to-[#9ab3cd]">
            <Icon w={12} h={5}><rect x=".5" y=".5" width="11" height="4" fill="#fff" stroke="#555" /></Icon>
          </button>
          <button aria-label="Maximize" className="flex w-[27px] items-center justify-center border-r border-[#5b6a7c] bg-linear-to-b from-[#d4e2f0] to-[#9ab3cd]">
            <Icon w={12} h={10}><rect x=".5" y=".5" width="11" height="9" fill="#fff" stroke="#555" /><rect x="3.500" y="3.500" width="5" height="3" fill="#bcd" stroke="#555" /></Icon>
          </button>
          <button aria-label="Close" className="flex w-[46px] items-center justify-center bg-linear-to-b from-[#d98c7c] to-[#b23020]">
            <Icon w={11} h={9}><path d="M1.500 0l8 9M9.500 0l-8 9" stroke="#5a3c3c" strokeWidth="4" /><path d="M1.500 0l8 9M9.500 0l-8 9" stroke="#fff" strokeWidth="2.500" /></Icon>
          </button>
        </div>
      </header>
      {/* 菜单 */}
      <nav className="flex h-[30px] shrink-0 items-center gap-[29px] border-b border-white bg-[#5c6c7a] pl-3.5 text-[12px] text-[#e4e8ec]">
        {["File", "Edit", "Format", "Tools", "Project", "View", "?"].map((m) => <button key={m}>{m}</button>)}
      </nav>
      <Toolbar />
      <main className="flex min-h-0 flex-1 pt-1 pl-px">
        <Sidebar />
        <div className="ml-[3px] flex min-w-0 flex-1 flex-col">
          <div className="mr-1 min-h-0 flex-1 overflow-hidden bg-[#5c6c7b] pt-[3px] pl-[3px]">
            <ScreenWindow />
          </div>
          <FilmStrip />
        </div>
        <div className="w-px shrink-0" />
        <Palette />
      </main>
      {/* 状态栏 */}
      <footer className="mt-[3px] flex h-[25px] shrink-0 items-center border-t border-b-2 border-t-[#888] border-b-[#6b7480] bg-[#f0eded] pl-px font-['Liberation_Sans',sans-serif] text-[11px] text-black">
        <span className="flex-1">Program: Main / Screen: Screen_1</span>
        <span className="h-full w-[121px] border-l border-[#d2d2d2]" />
        <span className="h-full w-36 border-l border-[#d2d2d2]" />
        <span className="h-full w-[135px] border-l border-[#d2d2d2]" />
        <span className="h-full w-[114px] border-l border-[#d2d2d2]" />
        <span className="flex h-full w-5 items-end justify-end border-l border-[#d2d2d2] p-0.5">
          <Icon w={10} h={10}><path d="M8 0h2v2H8zM4 4h2v2H4zM8 4h2v2H8zM0 8h2v2H0zM4 8h2v2H4zM8 8h2v2H8z" fill="#bbb" /></Icon>
        </span>
      </footer>
    </div>
  );
}
